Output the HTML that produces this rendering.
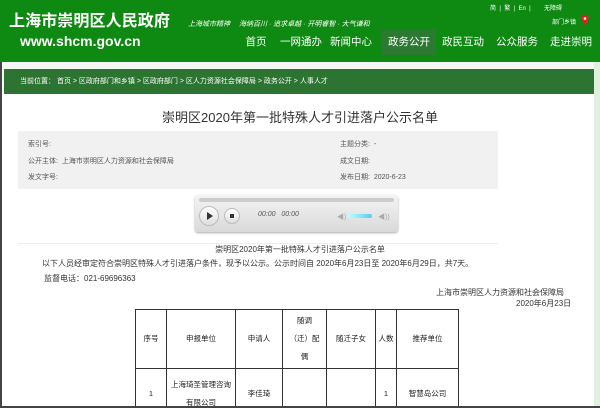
<!DOCTYPE html>
<html><head><meta charset="utf-8"><style>
*{margin:0;padding:0;box-sizing:border-box}
html,body{width:600px;height:408px;overflow:hidden}
body{background:#fff;font-family:"Liberation Sans","Noto Sans CJK SC",sans-serif;position:relative}
.a{position:absolute;white-space:nowrap}
#hd{position:absolute;left:0;top:0;width:600px;height:62px;background:#0e8a12}
.nav{position:absolute;top:30px;height:25px;line-height:25px;color:#fff;font-size:10.5px;text-align:center;white-space:nowrap}
#band{position:absolute;left:0;top:62px;width:600px;height:18px;background:#f4f8f4}
#bc{position:absolute;left:4px;top:69px;width:592px;height:25px;background:#2d7433;color:#fff;font-size:7px;line-height:25px;padding-left:16px;white-space:nowrap}
#lb{position:absolute;left:0;top:62px;width:2px;height:346px;background:#444}
#rb{position:absolute;left:594px;top:62px;width:6px;height:346px;background:#dff0df}
.g{color:#555;font-size:7px}
td{border:1px solid #333;font-size:7.5px;text-align:center;color:#222;line-height:18px;padding:0}
</style></head><body>
<div id="hd">
<div class="a" style="left:9px;top:7px;color:#fff;font-size:16px;font-weight:bold;letter-spacing:0.1px">上海市崇明区人民政府</div>
<div class="a" style="left:20px;top:33px;color:#fff;font-size:14px;font-weight:bold">www.shcm.gov.cn</div>
<div class="a" style="left:188px;top:19px;color:#fff;font-size:7px;font-style:italic">上海城市精神　 海纳百川 · 追求卓越 · 开明睿智 · 大气谦和</div>
<div class="a" style="left:490px;top:3px;color:#fff;font-size:6px">简 &nbsp;| &nbsp;繁 &nbsp;| &nbsp;En &nbsp;| &nbsp;&nbsp;&nbsp;&nbsp;&nbsp;&nbsp;&nbsp;无障碍</div>
<div class="a" style="left:552px;top:17px;color:#fff;font-size:6px">部门乡镇</div>
<svg class="a" style="left:581px;top:14px" width="8" height="12"><path d="M4 12 L0.5 5 A3.6 3.6 0 1 1 7.5 5Z" fill="#e02020"/><circle cx="4" cy="4.5" r="1.3" fill="#fff"/></svg>
<div class="nav" style="left:240px;width:32px">首页</div>
<div class="nav" style="left:280px;width:42px">一网通办</div>
<div class="nav" style="left:328px;width:46px">新闻中心</div>
<div class="nav" style="left:382px;width:54px;background:#2c7a32">政务公开</div>
<div class="nav" style="left:438px;width:50px">政民互动</div>
<div class="nav" style="left:492px;width:50px">公众服务</div>
<div class="nav" style="left:546px;width:50px">走进崇明</div>
</div>
<div id="band"></div>
<div id="bc">当前位置：&nbsp;首页 &gt; 区政府部门和乡镇 &gt; 区政府部门 &gt; 区人力资源社会保障局 &gt; 政务公开 &gt; 人事人才</div>
<div id="lb"></div><div id="rb"></div>
<div class="a" style="left:0;width:600px;text-align:center;top:107px;font-size:13px;color:#333">崇明区2020年第一批特殊人才引进落户公示名单</div>
<div class="a" style="left:18px;top:131px;width:480px;height:58px;background:#f1f1f1"></div>
<div class="a g" style="left:28px;top:139px">索引号:</div>
<div class="a g" style="left:28px;top:156px">公开主体:&nbsp; 上海市崇明区人力资源和社会保障局</div>
<div class="a g" style="left:28px;top:172px">发文字号:</div>
<div class="a g" style="left:340px;top:139px">主题分类:&nbsp; -</div>
<div class="a g" style="left:340px;top:156px">成文日期:</div>
<div class="a g" style="left:340px;top:172px">发布日期:&nbsp; 2020-6-23</div>
<div class="a" style="left:195px;top:195px;width:203px;height:37px;background:linear-gradient(#f4f4f4,#d9d9d9);border-radius:3px;box-shadow:0 1px 2px #aaa"></div>
<div class="a" style="left:199px;top:198px;width:195px;height:4px;background:#ccc;border-radius:2px"></div>
<div class="a" style="left:199px;top:206px;width:20px;height:20px;border-radius:50%;background:linear-gradient(#fff,#ddd);border:1px solid #bbb"></div>
<div class="a" style="left:207px;top:212px;border-left:6px solid #333;border-top:4px solid transparent;border-bottom:4px solid transparent"></div>
<div class="a" style="left:224px;top:208px;width:16px;height:16px;border-radius:50%;background:linear-gradient(#fff,#ddd);border:1px solid #bbb"></div>
<div class="a" style="left:230px;top:214px;width:4px;height:4px;background:#333"></div>
<div class="a" style="left:258px;top:211px;font-size:7px;font-style:italic;color:#555">00:00 &nbsp;&nbsp;00:00</div>
<div class="a" style="left:337px;top:212px;font-size:7px;color:#aaa">◀)</div>
<div class="a" style="left:348px;top:214px;width:24px;height:4px;background:linear-gradient(90deg,#bff,#5ce);border-radius:2px"></div>
<div class="a" style="left:378px;top:212px;font-size:7px;color:#aaa">◀))</div>
<div class="a" style="left:18px;top:243px;width:480px;height:1px;background:#eee"></div>
<div class="a" style="left:0;width:600px;text-align:center;top:244px;font-size:8px;color:#333">崇明区2020年第一批特殊人才引进落户公示名单</div>
<div class="a" style="left:42px;top:258px;font-size:8px;color:#333">以下人员经审定符合崇明区特殊人才引进落户条件，现予以公示。公示时间自 2020年6月23日至 2020年6月29日，共7天。</div>
<div class="a" style="left:44px;top:273px;font-size:8px;color:#333">监督电话：021-69696363</div>
<div class="a" style="left:436px;top:287px;font-size:8px;color:#333">上海市崇明区人力资源和社会保障局</div>
<div class="a" style="left:516px;top:298px;font-size:8px;color:#333">2020年6月23日</div>
<div class="a" style="left:0;top:300px;width:600px;height:106px;overflow:hidden">
<table class="a" style="left:135px;top:9px;border-collapse:collapse;width:324px;white-space:normal">
<tr style="height:59px"><td style="width:31px">序号</td><td style="width:69px">申报单位</td><td style="width:47px">申请人</td><td style="width:44px">随调<br>（迁）配<br>偶</td><td style="width:49px">随迁子女</td><td style="width:21px">人数</td><td>推荐单位</td></tr>
<tr style="height:50px"><td>1</td><td>上海琦圣管理咨询<br>有限公司</td><td>李佳琦</td><td></td><td></td><td>1</td><td>智慧岛公司</td></tr>
</table>
</div>
<div class="a" style="left:0;top:406px;width:600px;height:2px;background:#444"></div>
</body></html>
